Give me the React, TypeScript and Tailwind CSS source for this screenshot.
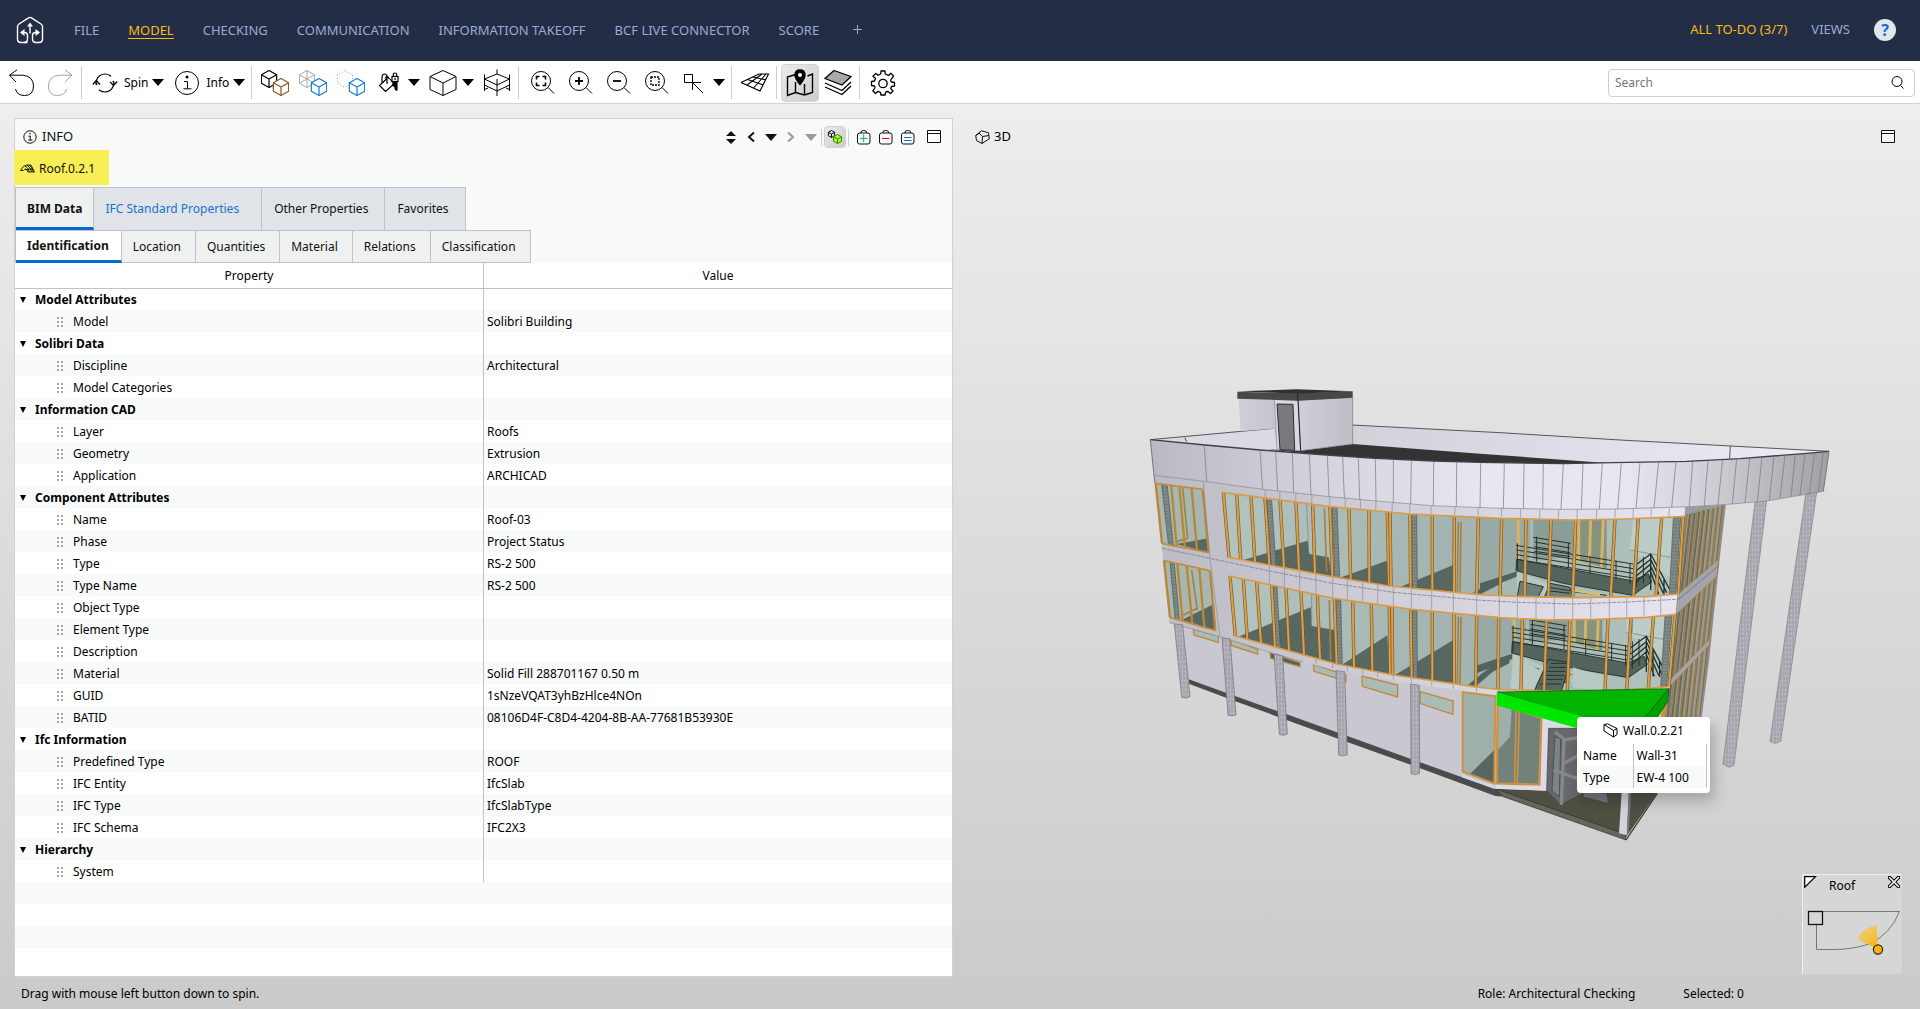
import React, { useState } from 'react';

type Pt = [number, number];

interface Group {
  name: string;
  rows: [string, string][];
}

const NAV = ['FILE', 'MODEL', 'CHECKING', 'COMMUNICATION', 'INFORMATION TAKEOFF', 'BCF LIVE CONNECTOR', 'SCORE'];
const MAIN_TABS = ['BIM Data', 'IFC Standard Properties', 'Other Properties', 'Favorites'];
const SUB_TABS = ['Identification', 'Location', 'Quantities', 'Material', 'Relations', 'Classification'];

const GROUPS: Group[] = [
  { name: 'Model Attributes', rows: [['Model', 'Solibri Building']] },
  { name: 'Solibri Data', rows: [['Discipline', 'Architectural'], ['Model Categories', '']] },
  { name: 'Information CAD', rows: [['Layer', 'Roofs'], ['Geometry', 'Extrusion'], ['Application', 'ARCHICAD']] },
  {
    name: 'Component Attributes',
    rows: [
      ['Name', 'Roof-03'],
      ['Phase', 'Project Status'],
      ['Type', 'RS-2 500'],
      ['Type Name', 'RS-2 500'],
      ['Object Type', ''],
      ['Element Type', ''],
      ['Description', ''],
      ['Material', 'Solid Fill 288701167 0.50 m'],
      ['GUID', '1sNzeVQAT3yhBzHlce4NOn'],
      ['BATID', '08106D4F-C8D4-4204-8B-AA-77681B53930E'],
    ],
  },
  {
    name: 'Ifc Information',
    rows: [['Predefined Type', 'ROOF'], ['IFC Entity', 'IfcSlab'], ['IFC Type', 'IfcSlabType'], ['IFC Schema', 'IFC2X3']],
  },
  { name: 'Hierarchy', rows: [['System', '']] },
];

/* ---------- icons ---------- */

const Icon: React.FC<{ w?: number; h?: number; sw?: number; children: React.ReactNode }> = ({ w = 28, h = 28, sw = 1, children }) => (
  <svg width={w} height={h} viewBox={`0 0 ${w} ${h}`} fill="none" stroke="currentColor" strokeWidth={sw} className="shrink-0" aria-hidden="true">
    {children}
  </svg>
);

const Caret = () => (
  <svg width="12" height="7" viewBox="0 0 12 7" className="shrink-0" aria-hidden="true">
    <path d="M0 0h12L6 7z" fill="currentColor" />
  </svg>
);

const Cube: React.FC<{ x: number; y: number; r: number; color?: string; fill?: string; sw?: number }> = ({ x, y, r, color = 'currentColor', fill = 'none', sw = 1 }) => {
  const k = r * 0.9;
  const h = r / 2;
  return (
    <g stroke={color} strokeWidth={sw} strokeLinejoin="round">
      <path fill={fill} d={`M${x} ${y - r}L${x + k} ${y - h}V${y + h}L${x} ${y + r}L${x - k} ${y + h}V${y - h}Z`} />
      <path d={`M${x - k} ${y - h}L${x} ${y}L${x + k} ${y - h}M${x} ${y}V${y + r}`} />
    </g>
  );
};

const Logo = () => (
  <svg width="28" height="28" viewBox="0 0 28 28" fill="none" stroke="#fff" strokeWidth="1.4" className="shrink-0" aria-label="Home">
    <path d="M11.500 26.500H5Q1.500 26.500 1.500 23V10.500Q1.500 9 3 8L12.500 1.800Q14 .9 15.500 1.800L25 8Q26.500 9 26.500 10.500V23Q26.500 26.500 23 26.500H19.500" />
    <path d="M5 16.500H8.500Q11.500 16.500 11.500 19.500V23Q11.500 26.500 8 26.500M23 16.500H19.500Q16.500 16.500 16.500 19.500V23Q16.500 26.500 20 26.500M14 17.500V9" />
    <path d="M11 10.500L14 6.500L17 10.500ZM8.500 13L4 16.500L8.500 20ZM19.500 13L24 16.500L19.500 20Z" fill="#fff" stroke="none" />
  </svg>
);

const InfoCircle: React.FC<{ size: number }> = ({ size }) => (
  <svg width={size} height={size} viewBox="0 0 26 26" fill="none" stroke="currentColor" strokeWidth={26 / size} className="shrink-0" aria-hidden="true">
    <circle cx="13" cy="13" r="11.500" />
    <path d="M10 11.500H13.500V18.500M9.500 18.800H17.500" />
    <circle cx="13" cy="7" r="1.500" fill="currentColor" stroke="none" />
  </svg>
);

const Magnifier: React.FC<{ children?: React.ReactNode }> = ({ children }) => (
  <Icon>
    <circle cx="13" cy="12" r="9.500" />
    <path d="M20 18.500L26 24.500" />
    {children}
  </Icon>
);

const WindowIcon = () => (
  <Icon w={16} h={14}>
    <path d="M1.500 .5H14.500V12.500H1.500ZM1.500 3.500H14.500" fill="#fff" fillOpacity=".6" />
  </Icon>
);

const Bag: React.FC<{ color: string; d: string }> = ({ color, d }) => (
  <Icon w={14} h={16}>
    <rect x=".5" y="4" width="12.500" height="11" rx="2" />
    <path d="M4 4V3Q4 1.500 6.700 1.500T9.500 3V4" />
    <path d={d} stroke={color} />
  </Icon>
);

/* ---------- top bars ---------- */

const Header = () => {
  const [active, setActive] = useState('MODEL');
  return (
    <header className="flex h-[61px] shrink-0 items-center bg-[#232e46] pb-0.5 pl-4 pr-6 text-[13px] text-[#9aaad0]">
      <Logo />
      <nav className="ml-[30px] flex items-center gap-[29px]">
        {NAV.map(item => (
          <a
            key={item}
            href="#"
            onClick={() => setActive(item)}
            className={item === active ? 'border-y border-t-transparent border-b-[#fdb913] leading-4 text-[#fdb913]' : 'border-y border-transparent leading-4'}
          >
            {item}
          </a>
        ))}
        <button aria-label="Add view" className="ml-1">
          <Icon w={11} h={11}><path d="M5.500 1V10M1 5.500H10" /></Icon>
        </button>
      </nav>
      <div className="ml-auto flex items-center gap-6">
        <a href="#" className="text-[#fdb913]">ALL TO-DO (3/7)</a>
        <a href="#">VIEWS</a>
        <button aria-label="Help" className="h-[22px] w-[22px] rounded-full bg-[#e1e5ec] text-base leading-[22px] font-bold text-[#0f6fd8]">?</button>
      </div>
    </header>
  );
};

const Sep = () => <span className="ml-0.5 mr-1 h-[33px] w-px shrink-0 bg-[#cfcfcf]" />;

const Tool: React.FC<{ label: string; active?: boolean; children: React.ReactNode }> = ({ label, active, children }) => (
  <button
    aria-label={label}
    className={
      active
        ? 'flex h-[38px] w-[38px] shrink-0 items-center justify-center rounded border border-[#d4d4d4] bg-gradient-to-br from-[#ebebeb] to-[#cdcdcd]'
        : 'flex h-[38px] w-[38px] shrink-0 items-center justify-center'
    }
  >
    {children}
  </button>
);

const ToolCaret: React.FC<{ label: string }> = ({ label }) => (
  <button aria-label={label} className="flex h-8 w-4 shrink-0 items-center"><Caret /></button>
);

const Toolbar = () => (
  <div className="flex h-[43px] shrink-0 items-center border-b border-[#d3d3d3] bg-white pl-[3px] pr-[5px] pt-px text-xs text-black">
    <Tool label="Undo">
      <Icon><path d="M9 .8L1.500 6.200L8 13M1.500 6.200H15Q25.500 7.500 25.500 17Q25.500 26.500 16.500 26.500Q9 26.500 7.500 20" /></Icon>
    </Tool>
    <Tool label="Redo">
      <span className="text-[#a3a3a3]">
        <Icon><path d="M19 .8L26 6.200L19 13M26 6.200H13Q2.500 7.500 2.500 17Q2.500 26.500 11.500 26.500Q19 26.500 20.500 20" /></Icon>
      </span>
    </Tool>
    <Sep />
    <button className="flex items-center gap-1.5 pl-1.5 pr-1">
      <Icon w={26} h={26} sw={1.2}>
        <path d="M4 14.500Q3.800 8.500 8 5.500Q13 2.500 18 5.500Q21 8 21.500 13M22 11.500Q22 17.500 18 20.500Q13 23.500 8 20.500Q5 18 4.500 13" strokeDasharray="22 5" />
        <path d="M.8 14.500L4.300 10.500L8 14.500M18 12L21.700 15.500L25.200 11.500" />
      </Icon>
      <span className="flex items-center gap-1">Spin <Caret /></span>
    </button>
    <button className="flex items-center gap-1.5 pl-1.5 pr-1">
      <InfoCircle size={26} />
      <span className="flex items-center gap-1">Info <Caret /></span>
    </button>
    <Sep />
    <Tool label="Select components">
      <Icon><Cube x={8} y={10} r={8.500} sw={1.2} /><Cube x={20} y={18} r={8.500} color="#8d552b" fill="#fff" sw={1.2} /></Icon>
    </Tool>
    <Tool label="Transparent">
      <Icon>
        <Cube x={8} y={10} r={8.500} color="#a8a8a8" />
        <path d="M8 1.500V10M.4 14.200L8 10L15.600 14.200" stroke="#a8a8a8" />
        <Cube x={20} y={18} r={8.500} color="#1479d6" fill="#fff" sw={1.2} />
      </Icon>
    </Tool>
    <Tool label="Hide components">
      <Icon>
        <path d="M8 1.500L15.600 5.800V14.200L8 18.500L.4 14.200V5.800Z" stroke="#999" strokeDasharray="1 2" />
        <Cube x={20} y={18} r={8.500} color="#1479d6" fill="#fff" sw={1.2} />
      </Icon>
    </Tool>
    <Tool label="Color">
      <Icon w={22} h={24} sw={1.2}>
        <path d="M8.500 8L1.500 14.500L7.500 20.500L16 13L12 8M4 12V6.500Q4 3 6.500 3T9 6.500V13M7 7.500L9 5L11.500 8" />
        <path d="M15.500 11.500H19V19Q17 20 17 16L14.500 14Z" fill="currentColor" />
        <rect x="14" y="5.500" width="6" height="5" />
        <path d="M15.300 5.500V3.800Q15.300 2 17 2T18.700 3.800V5.500M17 7V9" />
      </Icon>
    </Tool>
    <ToolCaret label="Color menu" />
    <Tool label="Views">
      <Icon><path d="M14 1.500L27 7.500V20.500L14 26.500L1 20.500V7.500ZM1 7.500L14 14L27 7.500M14 14V26.500" /></Icon>
    </Tool>
    <ToolCaret label="Views menu" />
    <Tool label="Section">
      <Icon>
        <path d="M14 .5V5M14 10V27M1.500 5.500V22M26.500 5.500V22M1.500 10L14 5L26.500 10L14 16L1.500 10M1.500 16L14 22L26.500 16M1.500 20.500L5 19M26.500 20.500L23 19" />
      </Icon>
    </Tool>
    <Sep />
    <Tool label="Zoom to fit">
      <Magnifier><path d="M8.500 10.500V7.500H11.500M14.500 7.500H17.500V10.500M17.500 13.500V16.500H14.500M11.500 16.500H8.500V13.500" strokeWidth="1.600" /></Magnifier>
    </Tool>
    <Tool label="Zoom in"><Magnifier><path d="M13 8V16M9 12H17" strokeWidth="1.800" /></Magnifier></Tool>
    <Tool label="Zoom out"><Magnifier><path d="M9 12H17" strokeWidth="1.800" /></Magnifier></Tool>
    <Tool label="Zoom to area">
      <Magnifier><rect x="9" y="8" width="8" height="8" strokeWidth="1.300" strokeDasharray="2 1" /></Magnifier>
    </Tool>
    <Tool label="Pick">
      <Icon w={22} h={22}><path d="M1.500 2.500H9.500V10.500H1.500ZM9.500 10.500H18M9.500 10.500V18M9.500 10.500L20 21" /></Icon>
    </Tool>
    <ToolCaret label="Pick menu" />
    <Sep />
    <Tool label="Grid">
      <Icon w={30}>
        <path d="M1 13.500L19 5H28.500L20 22L1 13.500M7 16L22 5M13.500 19L26 5M7.500 10.500L23.500 16M13 8L26 11" strokeWidth="1.100" />
      </Icon>
    </Tool>
    <Sep />
    <Tool label="Map" active>
      <Icon sw={1.4}>
        <path d="M9.500 5.500L1.500 8V26.500L9.500 23.500L18.500 26L26.500 23.500V5L21.500 7M9.500 13V23.500M18.500 15V26" />
        <path d="M14 15.500Q9 9.500 9 6Q9 1 14 1T19 6Q19 9.500 14 15.500Z" fill="#000" />
        <circle cx="14" cy="6" r="2" fill="#fff" stroke="none" />
      </Icon>
    </Tool>
    <Tool label="Layers">
      <Icon>
        <path d="M1 18L18 25.500L27 17M1 14L18 21.500L27 13" strokeWidth="1.300" />
        <path d="M10 1.500L27 7.500L18 16L1 9.500Z" fill="#a9a9a9" strokeWidth="1.200" />
      </Icon>
    </Tool>
    <Sep />
    <Tool label="Settings">
      <Icon sw={1.3}>
        <path d="M11.800 5L12 2H16L16.200 5L19.500 6.400L21.800 4.300L24.600 7.100L22.500 9.800Q21 12 22.500 13L25.500 13.500V17L22.500 17.500L21.700 19.500L24 22L21.500 24.500L19 22.500Q17 22.500 16.500 23.500L16 26H12L11.500 23.500L9 22.300L6.500 24.500L3.800 21.800L5.700 19.300Q6.500 17.500 5.500 17L2.500 16.500V12.500L5.500 12L6.500 9.500L4 7.200L6.800 4.400L9 6.200Z" strokeLinejoin="round" />
        <circle cx="14" cy="14.500" r="4.200" />
      </Icon>
    </Tool>
    <label className="ml-auto flex h-7 w-[307px] items-center rounded border border-[#cfcfcf] bg-white pl-1.5 pr-2.5">
      <input type="search" placeholder="Search" aria-label="Search" className="min-w-0 flex-1 bg-transparent text-xs outline-none placeholder:text-[#757575]" />
      <Icon w={13} h={13}><circle cx="6" cy="5.500" r="5" /><path d="M9.500 9.500L12.500 12.500" /></Icon>
    </label>
  </div>
);

/* ---------- info panel ---------- */

const SmallTool: React.FC<{ label: string; wide?: boolean; children: React.ReactNode }> = ({ label, wide, children }) => (
  <button aria-label={label} className={wide ? 'flex h-[22px] w-[22px] items-center justify-center' : 'flex h-[22px] w-5 items-center justify-center'}>
    {children}
  </button>
);

const InfoHeader = () => (
  <div className="flex h-[31px] items-center pl-2 pr-[7px] pt-[5px]">
    <InfoCircle size={14} />
    <h2 className="ml-[5px] text-[13px]">INFO</h2>
    <div className="ml-auto flex items-center">
      <SmallTool label="Expand or collapse">
        <Icon w={10} h={13}><path d="M5 0L10 5H0ZM5 13L0 8H10Z" fill="currentColor" stroke="none" /></Icon>
      </SmallTool>
      <SmallTool label="Back"><Icon w={8} h={10} sw={2}><path d="M7 .5L2 5L7 9.500" /></Icon></SmallTool>
      <SmallTool label="Back history"><Caret /></SmallTool>
      <span className="flex text-[#999]">
        <SmallTool label="Forward"><Icon w={8} h={10} sw={2}><path d="M1 .5L6 5L1 9.500" /></Icon></SmallTool>
        <SmallTool label="Forward history"><Caret /></SmallTool>
      </span>
      <span className="mr-0.5 h-[17px] w-px bg-[#d0d0d0]" />
      <button aria-label="Follow selection" className="flex h-[22px] w-[22px] items-center justify-center rounded border border-[#d0d0d0] bg-gradient-to-br from-[#ebebeb] to-[#cbcbcb]">
        <Icon w={16} h={16}><Cube x={4.500} y={5} r={3.500} /><Cube x={10.500} y={10} r={4.500} color="#3f8a00" fill="#9cff2e" /></Icon>
      </button>
      <span className="ml-0.5 mr-1 h-[17px] w-px bg-[#d0d0d0]" />
      <SmallTool label="Add to basket" wide><Bag color="#00b871" d="M6.700 5.500V13M3 9.500H10.500" /></SmallTool>
      <SmallTool label="Remove from basket" wide><Bag color="#f00" d="M3 9.500H10.500" /></SmallTool>
      <SmallTool label="Set basket" wide><Bag color="#0f6fd8" d="M3 8.500H10.500M3 11.500H10.500" /></SmallTool>
      <span className="ml-1 flex"><SmallTool label="Maximize info" wide><WindowIcon /></SmallTool></span>
    </div>
  </div>
);

const RoofIcon = () => (
  <Icon w={15} h={10}>
    <path d="M.5 6.500Q3 1 7 1H11L14.500 8H8Q6 3 3.500 6.500ZM5 2Q8 3 9.500 8M7 1Q10 3 12 8M9 1Q12 3 13.500 8M5 5.500L13 5" strokeWidth=".9" />
  </Icon>
);

const PropertyTable = () => {
  const [closed, setClosed] = useState<string[]>([]);
  const toggle = (name: string) =>
    setClosed(prev => (prev.includes(name) ? prev.filter(n => n !== name) : [...prev, name]));

  return (
    <div className="flex-1 overflow-hidden bg-white">
      <table className="w-full table-fixed border-collapse text-xs text-black">
        <thead>
          <tr className="h-[25px] border-b border-[#bfc3c9]">
            <th className="border-r border-[#bfc3c9] p-0 pt-0.5 font-normal">Property</th>
            <th className="p-0 pt-0.5 font-normal">Value</th>
          </tr>
        </thead>
        <tbody className="[&>tr:nth-child(even)]:bg-[#f8faf9]">
          {GROUPS.map(group => (
            <React.Fragment key={group.name}>
              <tr className="h-[22px]">
                <td className="border-r border-[#bfc3c9] p-0 pt-0.5">
                  <button onClick={() => toggle(group.name)} className="flex items-center gap-[9px] pl-[5px] font-bold leading-4">
                    <svg width="6" height="6" viewBox="0 0 6 6" aria-hidden="true"><path d="M0 0H6L3 6Z" /></svg>
                    {group.name}
                  </button>
                </td>
                <td className="p-0" />
              </tr>
              {!closed.includes(group.name) && group.rows.map(([key, value]) => (
                <tr key={key} className="h-[22px]">
                  <td className="border-r border-[#bfc3c9] p-0 pt-0.5">
                    <div className="flex items-center gap-2.5 pl-[42px] leading-4">
                      <svg width="6" height="10" viewBox="0 0 6 10" fill="#a3a3a3" aria-hidden="true">
                        <path d="M0 0h2v2H0zM4 0h2v2H4zM0 4h2v2H0zM4 4h2v2H4zM0 8h2v2H0zM4 8h2v2H4z" />
                      </svg>
                      {key}
                    </div>
                  </td>
                  <td className="p-0 pl-[3px] pt-0.5 leading-4">{value}</td>
                </tr>
              ))}
            </React.Fragment>
          ))}
          <tr className="h-[22px]"><td colSpan={2} /></tr>
          <tr className="h-[22px]"><td colSpan={2} /></tr>
          <tr className="h-[22px]"><td colSpan={2} /></tr>
        </tbody>
      </table>
    </div>
  );
};

const tabStyle = (on: boolean, link: boolean) => {
  if (on) return 'border-t border-r border-[#bfc3c9] border-b-[3px] border-b-[#0768d8] bg-[#eff1f0] px-[11px] pt-0.5 font-bold';
  if (link) return 'border-t border-r border-[#bfc3c9] bg-[#e0e3e8] pl-[11px] pr-[22px] text-[#1675cc]';
  return 'border-t border-r border-[#bfc3c9] bg-[#e0e3e8] pl-3 pr-4';
};

const InfoPanel = () => {
  const [mainTab, setMainTab] = useState('BIM Data');
  const [subTab, setSubTab] = useState('Identification');
  return (
    <section className="mt-3.5 flex min-w-0 flex-col border border-[#cfd2d5] bg-[#f8faf9]">
      <InfoHeader />
      <div className="-ml-px mb-0.5 flex h-[35px] items-center gap-1 self-start bg-[#f8ef56] pl-1.5 pr-3.5 pt-0.5 text-xs">
        <RoofIcon />
        <span>Roof.0.2.1</span>
      </div>
      <div role="tablist" className="flex h-[43px] border-l border-[#bfc3c9] text-xs">
        {MAIN_TABS.map(tab => (
          <button key={tab} role="tab" aria-selected={tab === mainTab} onClick={() => setMainTab(tab)} className={tabStyle(tab === mainTab, tab.startsWith('IFC'))}>
            {tab}
          </button>
        ))}
      </div>
      <div role="tablist" className="flex h-[33px] border-l border-[#bfc3c9] text-xs">
        {SUB_TABS.map(tab => (
          <button
            key={tab}
            role="tab"
            aria-selected={tab === subTab}
            onClick={() => setSubTab(tab)}
            className={
              tab === subTab
                ? 'border-t border-r border-b-[3px] border-[#bfc3c9] border-b-[#0768d8] bg-white pl-[11px] pr-3 font-bold'
                : 'border-y border-r border-[#bfc3c9] bg-[#eff1f0] pl-[11px] pr-3.5'
            }
          >
            {tab}
          </button>
        ))}
      </div>
      <PropertyTable />
    </section>
  );
};

/* ---------- 3D model ---------- */

const pts = (list: Pt[]) => list.map(p => p.join(',')).join(' ');

// y on a polyline for a given x
const at = (line: Pt[], x: number) => {
  for (let i = 1; i < line.length; i++) {
    const [x0, y0] = line[i - 1];
    const [x1, y1] = line[i];
    if (x <= x1) return y0 + ((x - x0) / (x1 - x0)) * (y1 - y0);
  }
  return line[line.length - 1][1];
};

const FASCIA_TOP: Pt[] = [[31, 209], [195, 225], [360, 240], [560, 255], [705, 265], [880, 273], [1020, 277], [1270, 281], [1420, 278], [1640, 274], [1800, 266], [1900, 258], [2000, 250], [2067, 244]];
const FASCIA_BOTTOM: Pt[] = [[42, 316], [200, 335], [368, 358], [567, 380], [708, 393], [874, 407], [950, 410], [1090, 415], [1264, 418], [1425, 417], [1585, 412], [1650, 410], [1775, 402], [1880, 393], [2050, 364]];
const STRIP: Pt[] = [[42, 316], [200, 335], [368, 358], [567, 380], [708, 393], [874, 407], [950, 410], [1090, 415], [1264, 418], [1425, 417], [1585, 412], [1636, 412]];
const ROW1_TOP: Pt[] = [[247, 367], [570, 410], [810, 432], [1080, 445], [1300, 450], [1450, 447], [1632, 440]];
const ROW1_BOTTOM: Pt[] = [[265, 562], [575, 620], [747, 648], [1015, 674], [1150, 680], [1300, 683], [1520, 680], [1615, 672]];
const ROW2_TOP: Pt[] = [[268, 618], [580, 685], [815, 718], [1080, 743], [1220, 750], [1370, 748], [1520, 742], [1608, 733]];
const ROW2_BOTTOM: Pt[] = [[285, 798], [590, 882], [760, 915], [1000, 950], [1075, 958], [1290, 965], [1460, 960], [1587, 950]];

const SEAMS: Pt[] = [
  [193, 200], [360, 368], [407, 413], [457, 461], [508, 513], [562, 567], [608, 613], [655, 659], [706, 708], [760, 760], [814, 812], [881, 880], [950, 949], [1022, 1020],
  [1093, 1090], [1152, 1150], [1210, 1208], [1270, 1263], [1329, 1324], [1387, 1378], [1444, 1433], [1500, 1488], [1556, 1542], [1608, 1595], [1658, 1648], [1704, 1693],
  [1748, 1734], [1790, 1777], [1829, 1815], [1866, 1852], [1902, 1888], [1935, 1920], [1966, 1953], [1995, 1980], [2024, 2008], [2050, 2035],
];
const STRIP_SEAMS = [376, 420, 468, 516, 570, 616, 662, 708, 757, 810, 874, 945, 1015, 1085, 1142, 1200, 1256, 1312, 1370, 1426, 1480, 1534, 1588];
const BAND_SEAMS = [388, 433, 479, 528, 578, 622, 668, 713, 760, 814, 875, 940, 1010, 1078, 1132, 1188, 1243, 1298, 1352, 1408, 1460, 1512, 1562];
const ROW1_MULLIONS: Pt[] = [
  [250, 267], [290, 302], [333, 345], [375, 388], [420, 432], [468, 477], [518, 525], [570, 577], [627, 632], [687, 688], [742, 747], [750, 753], [810, 812], [877, 877], [943, 942],
  [1015, 1010], [1085, 1080], [1158, 1154], [1233, 1225], [1307, 1298], [1425, 1412], [1495, 1480], [1565, 1548], [1630, 1615],
];
const ROW2_MULLIONS: Pt[] = [
  [270, 286], [310, 322], [350, 363], [395, 405], [438, 447], [483, 492], [532, 540], [583, 590], [638, 642], [694, 697], [748, 750], [756, 758], [812, 815], [877, 877], [942, 942],
  [1010, 1007], [1076, 1074], [1147, 1143], [1220, 1212], [1290, 1282], [1404, 1395], [1473, 1460], [1540, 1525], [1605, 1587],
];

const WALL_COLUMNS: Pt[][] = [
  [[65, 345], [82, 348], [100, 525], [85, 520]],
  [[380, 390], [395, 392], [408, 588], [394, 585]],
  [[576, 412], [591, 413], [599, 622], [584, 620]],
  [[815, 433], [830, 433], [832, 655], [818, 655]],
  [[1600, 444], [1622, 442], [1608, 670], [1588, 672]],
  [[90, 578], [103, 582], [118, 748], [105, 745]],
  [[399, 648], [411, 650], [421, 835], [407, 830]],
  [[588, 688], [602, 690], [607, 884], [593, 880]],
  [[816, 722], [831, 722], [832, 925], [820, 925]],
  [[1575, 738], [1596, 736], [1580, 948], [1562, 950]],
];
const FRONT_COLUMNS: Pt[][] = [
  [[103, 762], [128, 764], [150, 980], [138, 984], [125, 982]],
  [[246, 804], [270, 806], [288, 1035], [276, 1038], [264, 1036]],
  [[402, 852], [428, 858], [442, 1092], [430, 1096], [418, 1093]],
  [[588, 902], [614, 905], [622, 1154], [608, 1158], [596, 1155]],
  [[812, 942], [838, 946], [839, 1210], [826, 1214], [813, 1211]],
];
const OUTER_COLUMNS: Pt[][] = [
  [[1845, 396], [1880, 391], [1782, 1186], [1766, 1192], [1749, 1182]],
  [[1997, 374], [2030, 367], [1922, 1114], [1906, 1120], [1890, 1114]],
];
const VENTS: Pt[][] = [
  [[160, 778], [235, 798], [235, 817], [162, 795]],
  [[272, 808], [353, 838], [353, 852], [275, 827]],
  [[390, 848], [480, 878], [480, 890], [392, 865]],
  [[520, 883], [618, 915], [618, 933], [522, 904]],
  [[666, 918], [773, 945], [773, 981], [667, 949]],
  [[840, 965], [940, 993], [938, 1033], [840, 1000]],
];
const FLOORS: Pt[][] = [
  [[110, 522], [205, 505], [207, 548]],
  [[310, 570], [503, 512], [508, 552], [566, 562], [575, 620]],
  [[600, 623], [740, 572], [747, 648]],
  [[782, 650], [940, 585], [943, 666]],
  [[125, 750], [222, 702], [227, 782]],
  [[295, 800], [512, 712], [515, 768], [585, 780], [590, 882]],
  [[606, 884], [742, 796], [748, 912]],
  [[765, 915], [940, 810], [943, 940]],
];

const GLASS_ROW1 = pts([...ROW1_TOP, ...[...ROW1_BOTTOM].reverse()]);
const GLASS_ROW2 = pts([...ROW2_TOP, ...[...ROW2_BOTTOM].reverse()]);

const Poly: React.FC<{ p: Pt[]; fill: string; stroke?: string; sw?: number }> = ({ p, fill, stroke, sw = 2 }) => (
  <polygon points={pts(p)} fill={fill} stroke={stroke} strokeWidth={stroke ? sw : undefined} />
);

const Mullions: React.FC<{ list: Pt[]; top: Pt[]; bottom: Pt[] }> = ({ list, top, bottom }) => (
  <g>
    {list.map(([a, b]) => (
      <g key={a}>
        <line x1={a} y1={at(top, a)} x2={b} y2={at(bottom, b)} stroke="#7c5a27" strokeWidth="10" />
        <line x1={a} y1={at(top, a)} x2={b} y2={at(bottom, b)} stroke="#dba04c" strokeWidth="6" />
      </g>
    ))}
    <polyline points={pts(top)} fill="none" stroke="#d89c48" strokeWidth="5" />
    <polyline points={pts(bottom)} fill="none" stroke="#d89c48" strokeWidth="5" />
  </g>
);

// Staircase and landing seen through the curved glass
const Stairs = () => (
  <g fill="none" stroke="#25302b" strokeWidth="3">
    <path d="M1020 430L1170 430V560L1120 604L1020 640Z" fill="#98aaa5" stroke="none" />
    <path d="M1180 448H1300V560L1180 570Z" fill="#8a9d97" stroke="none" />
    <path d="M1480 440L1610 435V640L1560 600L1470 540Z" fill="#bccdc9" stroke="none" />
    <path d="M1310 440H1400V595L1310 570Z" fill="#87927f" stroke="none" />
    <path d="M1316 442V580M1352 442L1348 592M1390 442L1384 596M1135 440V570" stroke="#d3b564" strokeWidth="9" />
    <path d="M1020 640L1135 602V618L1020 664Z" fill="#52635c" stroke="none" />
    <path d="M1130 600L1220 640L1330 690H1130Z" fill="#b5c7c2" stroke="none" />
    <path d="M1130 568L1475 632L1525 612L1535 636L1478 676L1270 640L1128 602Z" fill="#53645c" stroke="#2c3732" />
    <path d="M1128 526L1480 582M1130 540L1480 596M1130 554L1480 610M1130 568L1480 624M1180 502L1292 520M1184 516L1290 534M1184 530L1290 548M1184 544L1290 560" />
    <path d="M1132 520V600M1190 500V575M1230 508V585M1285 518V592M1350 560V610M1428 572V625M1470 580V640M1490 566V650M1510 560V640" />
    <path d="M1480 590L1532 552L1590 660M1484 606L1532 568L1580 668M1484 622L1530 584L1570 670M1486 638L1530 600L1556 672M1532 552V660M1552 590V672M1572 628V674" strokeWidth="4" />
    <path d="M1140 634L1210 650L1190 690H1130ZM1230 640L1290 652L1300 690H1210Z" fill="#6f8079" />
    <path d="M1225 652L1290 662M1222 662L1290 670M1304 666L1400 676" />
    <path d="M1304 662L1380 674" stroke="#e0bd6b" strokeWidth="7" />
    <path d="M1470 540L1590 562M1490 540V450" strokeWidth="1" />
  </g>
);

const Building = () => (
  <svg viewBox="-561 -630 2901 2451" className="block min-h-0 w-full flex-1" role="img" aria-label="Solibri Building">
    <defs>
      <linearGradient id="fascia" x1="0" x2="1">
        <stop offset="0" stopColor="#bab9c1" />
        <stop offset=".25" stopColor="#d5d4de" />
        <stop offset=".5" stopColor="#e7e6f1" />
        <stop offset=".7" stopColor="#e8e7f1" />
        <stop offset=".84" stopColor="#cccbd2" />
        <stop offset="1" stopColor="#a0a0a4" />
      </linearGradient>
      <linearGradient id="wall" x1="0" x2="1">
        <stop offset="0" stopColor="#bcbbc4" />
        <stop offset=".5" stopColor="#d3d2dc" />
        <stop offset="1" stopColor="#e6e5f0" />
      </linearGradient>
      <linearGradient id="inner" x1="0" x2="1">
        <stop offset="0" stopColor="#d2d1da" />
        <stop offset="1" stopColor="#eeedf7" />
      </linearGradient>
      <linearGradient id="core" x1="0" x2="1">
        <stop offset="0" stopColor="#d0cfd9" />
        <stop offset="1" stopColor="#bfbec7" />
      </linearGradient>
      <linearGradient id="glass" x1="0" x2="1">
        <stop offset="0" stopColor="#b3c3bf" />
        <stop offset=".5" stopColor="#a3b4b0" />
        <stop offset="1" stopColor="#b1c3be" />
      </linearGradient>
      <pattern id="steel" width="9" height="14" patternUnits="userSpaceOnUse">
        <rect width="9" height="14" fill="#c2c1ca" />
        <path d="M2 0L5 7L2 14M7 0V6M8 9L6 14" stroke="#8a8a91" strokeWidth="2" fill="none" />
      </pattern>
      <pattern id="steelDark" width="8" height="10" patternUnits="userSpaceOnUse">
        <rect width="8" height="10" fill="#8d9896" />
        <path d="M2 0V5M6 4V9" stroke="#5a6461" strokeWidth="3" />
      </pattern>
      <clipPath id="row1"><polygon points={GLASS_ROW1} /></clipPath>
      <clipPath id="row2"><polygon points={GLASS_ROW2} /></clipPath>
    </defs>

    {/* right hand columns */}
    {OUTER_COLUMNS.map((c, i) => <Poly key={i} p={c} fill="url(#steel)" stroke="#7d7d83" />)}

    {/* side facade */}
    <Poly p={[[1636, 412], [1755, 404], [1735, 580], [1705, 870], [1682, 1045], [1570, 1045], [1587, 950], [1610, 675]]} fill="#929d98" />
    <Poly p={[[1636, 412], [1690, 408], [1638, 438]]} fill="#9c9ba3" />
    {[0, 1, 2, 3, 4, 5, 6, 7].map(i => {
      const t = i / 7;
      return (
        <g key={i}>
          <line x1={1650 + t * 98} y1={432 - t * 25} x2={1582 + t * 98} y2={1045} stroke="#626b67" strokeWidth="6" />
          <line x1={1641 + t * 108} y1={432 - t * 25} x2={1574 + t * 108} y2={1045} stroke="#a87a38" strokeWidth="5" />
        </g>
      );
    })}
    <path d="M1755 404L1735 580L1705 870L1682 1045" fill="none" stroke="#8e8d94" strokeWidth="5" />
    <Poly p={[[1612, 674], [1736, 568], [1731, 618], [1608, 734]]} fill="#a5a3ab" stroke="#a87a38" />
    <path d="M1611 692L1735 588" stroke="#66656b" strokeWidth="2" />
    <Poly p={[[1590, 930], [1711, 805], [1708, 825], [1588, 950]]} fill="#a5a3ab" stroke="#a87a38" />

    {/* ground floor */}
    <Poly p={[[128, 764], [966, 955], [1070, 965], [1070, 1262], [146, 930]]} fill="url(#core)" />
    <Poly p={[[128, 764], [300, 800], [620, 900], [966, 960], [966, 1220], [146, 930]]} fill="#c9c8d1" />
    <Poly p={[[146, 928], [285, 978], [440, 1033], [620, 1097], [840, 1177], [966, 1222], [1070, 1258], [1110, 1270], [1110, 1281], [1066, 1278], [820, 1187], [590, 1105], [290, 995], [148, 942]]} fill="#4b4b4b" />
    {VENTS.map((v, i) => <Poly key={i} p={v} fill={i === 2 ? '#53635c' : '#abbcb7'} stroke="#bd8a3c" sw={4} />)}

    {/* entrance */}
    <Poly p={[[1065, 1256], [1220, 1262], [1320, 1270], [1560, 1250], [1550, 1270], [1458, 1402]]} fill="#4f4f42" />
    <Poly p={[[1065, 1256], [1455, 1392], [1458, 1410], [1090, 1280]]} fill="#66665a" stroke="#2f2f28" />
    <path d="M1458 1410L1552 1270" stroke="#38382f" strokeWidth="4" />
    <Poly p={[[1060, 978], [1320, 1060], [1320, 1082], [1222, 1076], [1218, 1262], [1066, 1256]]} fill="#dddce6" />
    <Poly p={[[968, 967], [1066, 978], [1063, 1240], [968, 1205]]} fill="#9fb0ab" />
    <Poly p={[[990, 1212], [1063, 1140], [1063, 1240]]} fill="#586860" />
    <Poly p={[[968, 967], [1066, 978], [1063, 1240], [968, 1205]]} fill="none" stroke="#cc9242" sw={6} />
    <Poly p={[[966, 1212], [1063, 1246], [1066, 1258], [966, 1222]]} fill="#d6d5df" />
    <Poly p={[[1073, 1000], [1204, 1044], [1198, 1244], [1070, 1240]]} fill="#71827b" />
    <Poly p={[[1073, 1000], [1115, 1014], [1110, 1100], [1073, 1140]]} fill="#9fb0ab" />
    <Poly p={[[1073, 1000], [1204, 1044], [1198, 1244], [1070, 1240]]} fill="none" stroke="#cc9242" sw={7} />
    <path d="M1138 1022L1132 1242M1128 1022L1124 1242" stroke="#cc9242" strokeWidth="5" />
    <Poly p={[[1226, 1075], [1330, 1075], [1330, 1270], [1262, 1305], [1220, 1262]]} fill="#68686c" stroke="#3d3d42" />
    <Poly p={[[1245, 1100], [1262, 1106], [1258, 1280], [1236, 1262]]} fill="#7b8581" stroke="#3d3d42" />
    <path d="M1272 1105L1264 1305M1245 1085L1275 1110L1330 1100M1270 1180L1330 1150M1240 1200L1330 1232" stroke="#86868b" strokeWidth="10" fill="none" />
    <Poly p={[[1330, 1262], [1400, 1270], [1405, 1300], [1330, 1280]]} fill="#77777b" stroke="#4b4b50" />
    <Poly p={[[1446, 1250], [1467, 1250], [1461, 1396], [1437, 1390]]} fill="#d4d3dd" />
    <Poly p={[[1467, 1250], [1475, 1250], [1466, 1392], [1460, 1396]]} fill="#77777b" />
    <Poly p={[[1572, 1000], [1582, 990], [1574, 1045], [1560, 1045]]} fill="#cc9242" />

    {/* front facade */}
    <polygon points={pts([...STRIP, [1630, 440], [1612, 675], [1590, 950], [1584, 962], [1460, 972], [1290, 978], [1070, 976], [820, 942], [590, 903], [400, 850], [240, 800], [88, 758], [65, 525]])} fill="url(#wall)" />
    <Poly p={[[47, 340], [188, 358], [207, 548], [65, 520]]} fill="#a5b8b1" />
    <Poly p={[[72, 572], [210, 602], [227, 782], [90, 742]]} fill="#a5b8b1" />
    <polygon points={GLASS_ROW1} fill="url(#glass)" />
    <polygon points={GLASS_ROW2} fill="url(#glass)" />
    {FLOORS.map((f, i) => <Poly key={i} p={f} fill="#58675f" />)}
    <path d="M500 402L506 552M515 670V768M1000 668L1080 626V642L1022 672ZM985 944L1075 872V890L1008 948Z" fill="#52635c" stroke="#6f807a" strokeWidth="2" />
    <g clipPath="url(#row1)"><Stairs /></g>
    <g clipPath="url(#row2)">
      <g transform="translate(-13 247)"><Stairs /></g>
      <path d="M1020 915L1108 860V880L1020 925Z" fill="#52635c" />
      <path d="M1120 860L1200 900L1180 965H1110Z" fill="#b9cac5" />
      <path d="M1225 868L1290 878L1262 970H1180Z" fill="#586860" stroke="#27322d" strokeWidth="3" />
      <path d="M1232 880H1284M1226 892H1280M1220 904H1276M1214 916H1272M1208 928H1268M1200 942H1264" stroke="#27322d" strokeWidth="3" />
      <path d="M1298 892L1395 920V965L1298 952Z" fill="#b9cac5" />
    </g>
    {WALL_COLUMNS.map((c, i) => <Poly key={i} p={c} fill="url(#steelDark)" stroke="#4f5956" />)}
    <path d="M553 415L560 605M955 455L952 665M963 455L960 665M568 690L572 870M955 740L952 942M963 740L960 942M128 352L143 505M155 600L172 720M143 505L108 515M172 715L130 735" stroke="#a8813c" strokeWidth="5" fill="none" />
    {([[47, 66], [94, 110], [118, 135], [155, 171], [188, 206]] as Pt[]).map(([a, b]) => (
      <line key={a} x1={a} y1={340 + (a - 47) * 0.13} x2={b} y2={520 + (b - 65) * 0.2} stroke="#bd8537" strokeWidth="7" />
    ))}
    {([[72, 90], [112, 128], [140, 157], [178, 193], [210, 226]] as Pt[]).map(([a, b]) => (
      <line key={a} x1={a} y1={572 + (a - 72) * 0.22} x2={b} y2={742 + (b - 90) * 0.29} stroke="#bd8537" strokeWidth="7" />
    ))}
    <path d="M47 340L188 358M65 520L207 548M72 572L210 602M90 742L227 782" stroke="#c58c3c" strokeWidth="5" />
    <Mullions list={ROW1_MULLIONS} top={ROW1_TOP} bottom={ROW1_BOTTOM} />
    <Mullions list={ROW2_MULLIONS} top={ROW2_TOP} bottom={ROW2_BOTTOM} />

    {/* panel seams */}
    <g stroke="#8d8c95" strokeWidth="2" fill="none">
      {STRIP_SEAMS.map(x => <line key={x} x1={x} y1={at(STRIP, x)} x2={x - 1} y2={at(ROW1_TOP, x) - 3} />)}
      {BAND_SEAMS.map(x => <line key={x} x1={x} y1={at(ROW1_BOTTOM, x) + 3} x2={x} y2={at(ROW2_TOP, x) - 3} />)}
      {BAND_SEAMS.filter(x => x > 500).map(x => <line key={x} x1={x} y1={at(ROW2_BOTTOM, x) + 3} x2={x} y2={at(ROW2_BOTTOM, x) + 16} />)}
      <path d="M65 535L210 565L388 603L578 640L760 667L1010 690L1132 697L1300 702L1460 696L1610 688" stroke="#6f6e76" strokeDasharray="12 3" />
      <path d="M190 336L195 400L210 565L227 700L240 800M88 758L240 800L400 850L490 876" />
    </g>
    {FRONT_COLUMNS.map((c, i) => <Poly key={i} p={c} fill="url(#steel)" stroke="#6f6f76" />)}

    {/* roof */}
    <Poly p={[[31, 209], [402, 175], [411, 240], [360, 240], [195, 225]]} fill="#dbdae4" />
    <path d="M31 209L402 175M134 203L140 215" stroke="#55555a" strokeWidth="3" />
    <Poly p={[[636, 165], [1080, 188], [1440, 210], [2067, 244], [1900, 259], [1640, 275], [1420, 279], [1020, 252], [636, 222]]} fill="url(#inner)" />
    <path d="M636 165L1080 188L1440 210L2067 244M1771 228L1769 266" stroke="#55555a" strokeWidth="3" fill="none" />
    <Poly p={[[380, 238], [482, 242], [638, 222], [1020, 251], [1400, 279], [1270, 282], [1020, 278], [705, 266], [560, 256]]} fill="#333" />
    <Poly p={[[295, 84], [475, 90], [482, 242], [411, 238], [402, 176], [302, 184]]} fill="url(#core)" />
    <Poly p={[[403, 88], [475, 90], [482, 242], [411, 238]]} fill="#d9d8e1" stroke="#8d8c95" />
    <Poly p={[[411, 102], [459, 103], [464, 241], [420, 239]]} fill="#79787b" stroke="#2f2f31" sw={3} />
    <Poly p={[[475, 90], [638, 82], [638, 222], [482, 242]]} fill="url(#core)" stroke="#77777e" />
    <Poly p={[[292, 65], [472, 70], [638, 64], [638, 83], [474, 92], [292, 86]]} fill="#484848" />
    <Poly p={[[292, 64], [470, 58], [638, 64], [472, 71]]} fill="#2d302e" />
    <path d="M472 70L474 92L482 242" stroke="#222" strokeWidth="3" fill="none" />

    <polygon points={pts([...FASCIA_TOP, ...[...FASCIA_BOTTOM].reverse()])} fill="url(#fascia)" />
    <polyline points={pts(FASCIA_TOP)} fill="none" stroke="#3f3f44" strokeWidth="4" />
    <polyline points={pts(FASCIA_BOTTOM)} fill="none" stroke="#85848c" strokeWidth="2" />
    <path d="M31 209L42 316L45 340M2067 244L2050 364" stroke="#77767e" strokeWidth="3" fill="none" />
    {SEAMS.map(([a, b]) => (
      <line key={a} x1={a} y1={at(FASCIA_TOP, a)} x2={b} y2={at(FASCIA_BOTTOM, b)} stroke="#74737b" strokeWidth="2" />
    ))}

    {/* selected roof */}
    <Poly p={[[1072, 966], [1587, 956], [1515, 1042], [1320, 1042]]} fill="#00b400" stroke="#064d06" />
    <Poly p={[[1070, 967], [1330, 1040], [1330, 1080], [1070, 1006]]} fill="#00e600" />
    <Poly p={[[1587, 956], [1583, 995], [1550, 1045], [1512, 1045]]} fill="#00a000" stroke="#064d06" />
  </svg>
);

/* ---------- viewport ---------- */

const Tooltip = () => (
  <div className="absolute left-[624px] top-[613px] w-[133px] rounded bg-white px-[3px] pb-[5px] text-xs text-black shadow-[4px_8px_14px_rgba(0,0,0,0.22)]">
    <div className="flex h-[27px] items-center justify-center gap-1">
      <Icon w={16} h={15}><path d="M1 1.500L4.500 .8L14 5.500V11.500L10.500 14L1 8ZM1 1.500L10.500 7.500L14 5.500M10.500 7.500V14" /></Icon>
      Wall.0.2.21
    </div>
    <table className="w-full border-collapse">
      <tbody>
        <tr className="h-[22px]"><td className="w-[53px] border-r border-[#bfc3c9] p-0 pl-[3px] pt-0.5">Name</td><td className="border-r border-[#bfc3c9] p-0 pl-[3px] pt-0.5">Wall-31</td></tr>
        <tr className="h-[22px] bg-[#f8faf9]"><td className="border-r border-[#bfc3c9] p-0 pl-[3px] pt-0.5">Type</td><td className="border-r border-[#bfc3c9] p-0 pl-[3px] pt-0.5">EW-4 100</td></tr>
      </tbody>
    </table>
  </div>
);

const MiniMap = () => (
  <div className="absolute bottom-[3px] right-[18px] h-[100px] w-[100px] border-l border-t border-[#efefef] bg-[#d6d6d6]">
    <div className="flex items-start pl-px pr-0.5 pt-px text-xs text-black">
      <Icon w={13} h={12}><path d="M.7 .7H11.500L.7 11.300Z" fill="#fff" strokeWidth="1.200" /></Icon>
      <span className="ml-3 pt-0.5">Roof</span>
      <button aria-label="Close map" className="ml-auto">
        <Icon w={12} h={12}><path d="M1.500 1.500L10.500 10.500M10.500 1.500L1.500 10.500" strokeWidth="3.600" strokeLinecap="round" /><path d="M1.500 1.500L10.500 10.500M10.500 1.500L1.500 10.500" stroke="#fff" strokeWidth="1.600" strokeLinecap="round" /></Icon>
      </button>
    </div>
    <svg width="98" height="50" viewBox="0 0 98 50" fill="none" className="mt-[15px]" aria-hidden="true">
      <defs>
        <linearGradient id="beam" x1="0" y1="0" x2="1" y2="1">
          <stop offset="0" stopColor="#f5c95e" stopOpacity=".6" />
          <stop offset="1" stopColor="#ffb400" />
        </linearGradient>
      </defs>
      <path d="M6 2.500H96.500Q88 25 66 35Q50 40.500 30 40.500H13.500V2.500" stroke="#777" />
      <path d="M75 40L54 30Q60 18 73.500 16.500L74.500 36Z" fill="url(#beam)" />
      <rect x="5.500" y="2.500" width="14" height="13" fill="#d6d6d6" stroke="#111" strokeWidth="1.300" />
      <circle cx="75" cy="40.500" r="4.600" fill="#ffb000" stroke="#222" strokeWidth="1.200" />
    </svg>
  </div>
);

const Viewport = () => (
  <section className="relative flex min-w-0 flex-col">
    <div className="flex h-14 items-center pl-[22px] pr-6 pt-2.5">
      <Icon w={15} h={14}><path d="M.7 5.500L6.500 .8L13.500 2.800L14.300 8.800L7 13.500L1.500 10.500ZM.7 5.500L4 3.500M4 3L7.500 6.500L14 5.500M7.500 6.500L7 13.500" /></Icon>
      <h2 className="ml-1 text-[13px] text-black">3D</h2>
      <button aria-label="Maximize 3D" className="ml-auto"><WindowIcon /></button>
    </div>
    <Building />
    <Tooltip />
    <MiniMap />
  </section>
);

const App: React.FC = () => (
  <div className="flex h-screen flex-col overflow-hidden bg-gradient-to-b from-[#f2f2f2] to-[#cacaca] font-['Noto_Sans',sans-serif] text-[#111]">
    <Header />
    <Toolbar />
    <main className="grid min-h-0 flex-1 grid-cols-[939fr_967fr] grid-rows-[minmax(0,1fr)] pl-3.5">
      <InfoPanel />
      <Viewport />
    </main>
    <footer className="flex h-8 shrink-0 items-center pl-[21px] pr-44 pt-0.5 text-xs text-black">
      <span>Drag with mouse left button down to spin.</span>
      <span className="ml-auto">Role: Architectural Checking</span>
      <span className="ml-12">Selected: 0</span>
    </footer>
  </div>
);

export default App;
